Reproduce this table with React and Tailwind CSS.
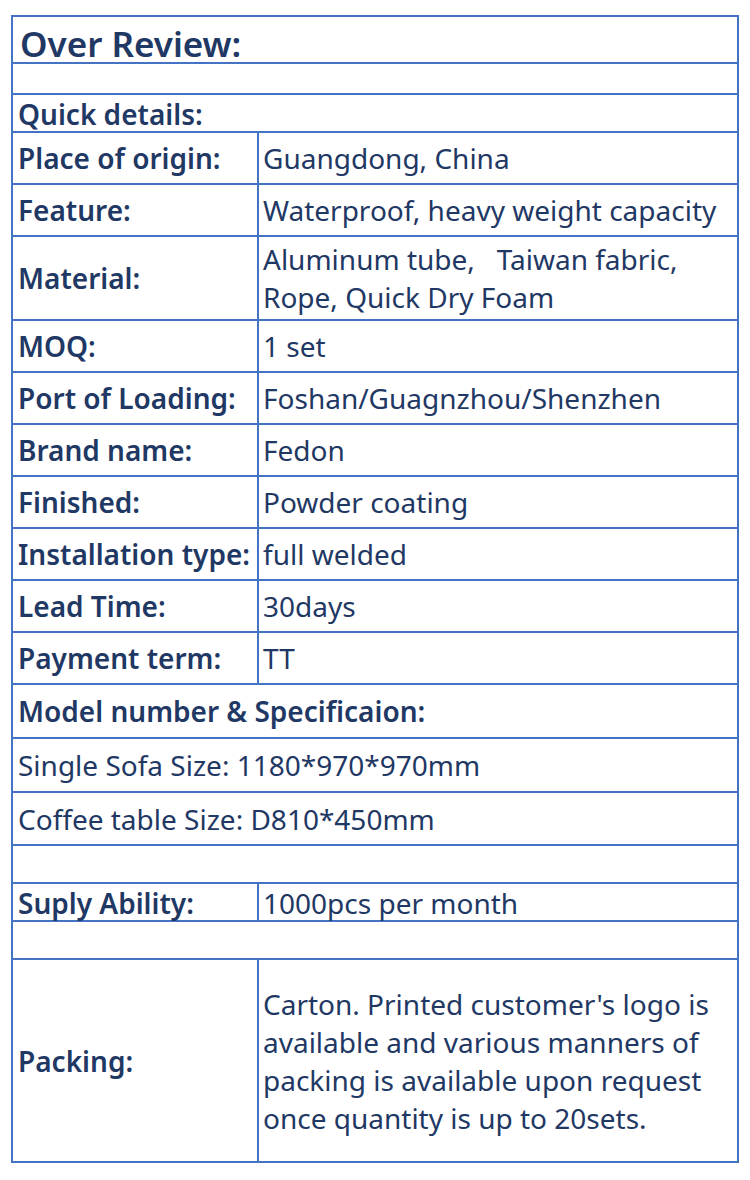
const rows = [
  { label: 'Place of origin:', value: ['Guangdong, China'], h: 'h-[52px]' },
  { label: 'Feature:', value: ['Waterproof, heavy weight capacity'], h: 'h-[52px]' },
  { label: 'Material:', value: ['Aluminum tube,\u00a0\u00a0 Taiwan fabric,', 'Rope, Quick Dry Foam'], h: 'h-[84px]' },
  { label: 'MOQ:', value: ['1 set'], h: 'h-[52px]' },
  { label: 'Port of Loading:', value: ['Foshan/Guagnzhou/Shenzhen'], h: 'h-[52px]' },
  { label: 'Brand name:', value: ['Fedon'], h: 'h-[52px]' },
  { label: 'Finished:', value: ['Powder coating'], h: 'h-[52px]' },
  { label: 'Installation type:', value: ['full welded'], h: 'h-[52px]' },
  { label: 'Lead Time:', value: ['30days'], h: 'h-[52px]' },
  { label: 'Payment term:', value: ['TT'], h: 'h-[52px]' },
]

const cell = 'border-2 border-[#4472c4] p-0 align-middle'

function App() {
  return (
    <div className="min-h-screen bg-white pt-[15px] pl-[11px] text-[#1f3864] font-['Noto_Sans','Liberation_Sans',sans-serif]">
      <table className="w-[728px] border-collapse table-fixed">
        <colgroup>
          <col className="w-[246px]" />
          <col />
        </colgroup>
        <tbody>
          {/* title */}
          <tr className="h-[47px]">
            <td colSpan={2} className={`${cell} !align-top pl-[7px] pt-[9px] text-[35px] font-semibold leading-none`}>Over Review:</td>
          </tr>
          <tr className="h-[31px]">
            <td colSpan={2} className={cell}></td>
          </tr>
          <tr className="h-[38px]">
            <td colSpan={2} className={`${cell} !align-top pl-[5px] pt-[5px] text-[28px] font-semibold leading-none`}>Quick details:</td>
          </tr>
          {rows.map((r) => (
            <tr key={r.label} className={r.h}>
              <td className={`${cell} pl-[5px] text-[28px] font-semibold`}>{r.label}</td>
              <td className={`${cell} pl-[4px] text-[28px] leading-[38px]`}>
                {r.value.map((v) => (
                  <div key={v}>{v}</div>
                ))}
              </td>
            </tr>
          ))}
          {/* specs */}
          <tr className="h-[54px]">
            <td colSpan={2} className={`${cell} pl-[5px] text-[28px] font-semibold`}>Model number &amp; Specificaion:</td>
          </tr>
          <tr className="h-[54px]">
            <td colSpan={2} className={`${cell} pl-[5px] text-[28px]`}>Single Sofa Size: 1180*970*970mm</td>
          </tr>
          <tr className="h-[53px]">
            <td colSpan={2} className={`${cell} pl-[5px] text-[28px]`}>Coffee table Size: D810*450mm</td>
          </tr>
          <tr className="h-[38px]">
            <td colSpan={2} className={cell}></td>
          </tr>
          <tr className="h-[38px]">
            <td className={`${cell} !align-top pl-[5px] pt-[5px] text-[28px] font-semibold leading-none`}>Suply Ability:</td>
            <td className={`${cell} !align-top pl-[4px] pt-[5px] text-[28px] leading-none`}>1000pcs per month</td>
          </tr>
          <tr className="h-[38px]">
            <td colSpan={2} className={cell}></td>
          </tr>
          {/* packing */}
          <tr className="h-[203px]">
            <td className={`${cell} pl-[5px] text-[28px] font-semibold`}>Packing:</td>
            <td className={`${cell} pl-[4px] text-[28px] leading-[38px]`}>
              Carton. Printed customer's logo is<br />
              available and various manners of<br />
              packing is available upon request<br />
              once quantity is up to 20sets.
            </td>
          </tr>
        </tbody>
      </table>
    </div>
  )
}

export default App
